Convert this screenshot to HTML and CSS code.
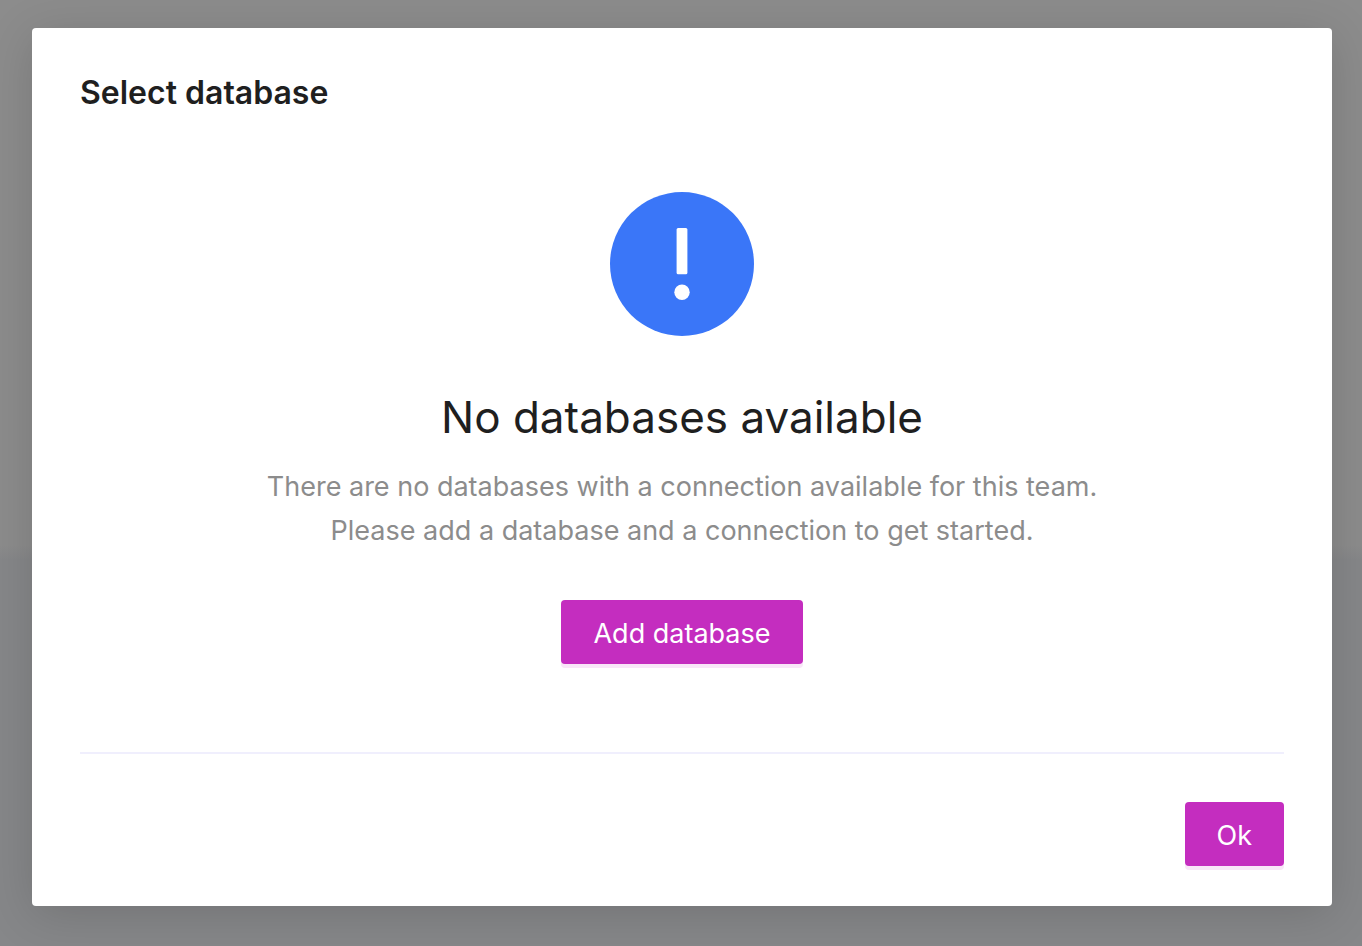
FILE: index.html
```html
<!DOCTYPE html>
<html lang="en">
<head>
<meta charset="utf-8">
<meta name="viewport" content="width=device-width, initial-scale=1">
<title>Select database</title>
<link rel="stylesheet" href="styles.css">
</head>
<body>
<main class="overlay">
  <section class="modal" role="dialog" aria-labelledby="modal-title">
    <h1 class="modal-title" id="modal-title">Select database</h1>
    <div class="empty">
      <svg class="empty-icon" viewBox="0 0 144 144" aria-hidden="true">
        <circle cx="72" cy="72" r="72" fill="#3a76f8"/>
        <rect x="66.6" y="36" width="10.8" height="46.3" rx="1.5" fill="#fff"/>
        <circle cx="72" cy="100.3" r="7.7" fill="#fff"/>
      </svg>
      <h2 class="empty-title">No databases available</h2>
      <p class="empty-text">There are no databases with a connection available for this team.<br>Please add a database and a connection to get started.</p>
      <button class="button" type="button">Add database</button>
    </div>
    <footer class="modal-footer">
      <button class="button" type="button">Ok</button>
    </footer>
  </section>
</main>
</body>
</html>
```

FILE: styles.css
```css
* {
  box-sizing: border-box;
}

body {
  margin: 0;
  font-family: Inter, "Liberation Sans", sans-serif;
  color: #1f1f1f;
}

.overlay {
  min-height: 100vh;
  padding: 28px 30px 40px 32px;
  background: linear-gradient(#8c8c8c 0 545px, #868789 560px);
}

.modal {
  padding: 40px 48px;
  border-radius: 4px;
  background: #fff;
  box-shadow: 0 8px 48px rgba(0, 0, 0, 0.15);
}

.modal-title {
  margin: 0;
  font-size: 32px;
  font-weight: 600;
  line-height: 50px;
}

.empty {
  display: flex;
  flex-direction: column;
  align-items: center;
  padding: 74px 0 88px;
  border-bottom: 2px solid #f0effd;
  text-align: center;
}

.empty-icon {
  width: 144px;
  height: 144px;
}

.empty-title {
  margin: 49px 0 16px;
  font-size: 44px;
  font-weight: 400;
  line-height: 64px;
}

.empty-text {
  margin: 0 0 47px;
  font-size: 27px;
  line-height: 44px;
  color: #8c8c8c;
}

.button {
  height: 64px;
  padding: 2px 32px 0;
  border: 0;
  border-radius: 4px;
  background: #c42dbf;
  box-shadow: 0 4px 0 #f9e6f8;
  color: #fff;
  font: inherit;
  font-size: 27px;
}

.modal-footer {
  display: flex;
  justify-content: flex-end;
  padding-top: 48px;
}
```
